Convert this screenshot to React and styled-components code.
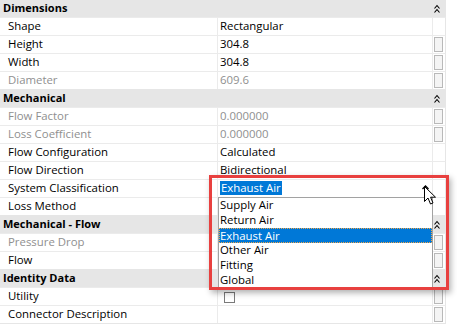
import React from "react";
import styled, { createGlobalStyle, css } from "styled-components";

const GlobalStyle = createGlobalStyle`
  body {
    margin: 0;
    background: #ffffff;
    font-family: "Open Sans", "Noto Sans", sans-serif;
    font-size: 11.4px;
    color: #000000;
  }
`;

const rows = [
  { section: "Dimensions", first: true },
  { label: "Shape", value: "Rectangular" },
  { label: "Height", value: "304.8", box: true },
  { label: "Width", value: "304.8", box: true },
  { label: "Diameter", value: "609.6", box: true, disabled: true },
  { section: "Mechanical" },
  { label: "Flow Factor", value: "0.000000", box: true, disabled: true },
  { label: "Loss Coefficient", value: "0.000000", box: true, disabled: true },
  { label: "Flow Configuration", value: "Calculated" },
  { label: "Flow Direction", value: "Bidirectional" },
  { label: "System Classification", combo: true },
  { label: "Loss Method", value: "" },
  { section: "Mechanical - Flow" },
  { label: "Pressure Drop", value: "", box: true, disabled: true },
  { label: "Flow", value: "", box: true },
  { section: "Identity Data" },
  { label: "Utility", check: true, box: true },
  { label: "Connector Description", value: "", box: true },
];

const options = ["Supply Air", "Return Air", "Exhaust Air", "Other Air", "Fitting", "Global"];

const Chevrons = () => (
  <svg width="6" height="9" viewBox="0 0 6 9">
    <polyline points="0.5,4.5 3,1.5 5.5,4.5" fill="none" stroke="#000" strokeWidth="1.1" />
    <polyline points="0.5,8.5 3,5.5 5.5,8.5" fill="none" stroke="#000" strokeWidth="1.1" />
  </svg>
);

const Caret = () => (
  <svg width="7" height="5" viewBox="0 0 7 5">
    <polyline points="0.5,4 3.5,1 6.5,4" fill="none" stroke="#000" strokeWidth="1.3" />
  </svg>
);

const Cursor = () => (
  <svg width="13" height="19" viewBox="0 0 13 19">
    <path
      d="M0.5 0.5 L0.5 15.5 L4 12 L6.5 18 L9 17 L6.6 11.2 L11.5 11.2 Z"
      fill="#ffffff"
      stroke="#000000"
      strokeWidth="1"
      strokeLinejoin="miter"
    />
  </svg>
);

const App = () => {
  return (
    <>
      <GlobalStyle />
      <Grid>
        {rows.map((r, i) =>
          r.section ? (
            <Section key={i} $first={r.first}>
              <SectionTitle>{r.section}</SectionTitle>
              <Chevrons />
            </Section>
          ) : (
            <Row key={i}>
              <Label $disabled={r.disabled}>{r.label}</Label>
              <Value $disabled={r.disabled}>
                {r.combo ? (
                  <>
                    <Selected>Exhaust Air</Selected>
                    <CaretWrap>
                      <Caret />
                    </CaretWrap>
                    <CursorWrap>
                      <Cursor />
                    </CursorWrap>
                    <List>
                      {options.map((o) => (
                        <Option key={o} $active={o === "Exhaust Air"}>
                          {o}
                        </Option>
                      ))}
                    </List>
                  </>
                ) : r.check ? (
                  <CheckBox />
                ) : (
                  r.value
                )}
              </Value>
              <ButtonCell>{r.box && <EditBox />}</ButtonCell>
            </Row>
          )
        )}
        <Highlight />
      </Grid>
    </>
  );
};

export default App;

const Grid = styled.div`
  position: relative;
  width: 446px;
  border-bottom: 1px solid #e6e6e6;
`;

const Section = styled.div`
  display: flex;
  align-items: center;
  justify-content: space-between;
  height: 18px;
  padding: 0 6px 0 3px;
  background: #e6e6e6;
  box-sizing: border-box;
  ${(p) =>
    p.$first &&
    css`
      margin-top: -1px;
    `}
`;

const SectionTitle = styled.span`
  font-weight: 700;
  font-size: 11px;
  line-height: 18px;
`;

const Row = styled.div`
  display: flex;
  height: 18px;
  box-sizing: border-box;
  border-top: 1px solid #ebebeb;
  border-right: 1px solid #e6e6e6;
`;

const Label = styled.div`
  width: 218px;
  box-sizing: border-box;
  padding-left: 8px;
  border-right: 1px solid #ebebeb;
  line-height: 16px;
  white-space: nowrap;
  color: ${(p) => (p.$disabled ? "#8f8f8f" : "#000000")};
`;

const Value = styled.div`
  position: relative;
  width: 215px;
  box-sizing: border-box;
  padding-left: 2px;
  border-right: 1px solid #ebebeb;
  line-height: 16px;
  white-space: nowrap;
  color: ${(p) => (p.$disabled ? "#8f8f8f" : "#000000")};
`;

const ButtonCell = styled.div`
  flex: 1;
  padding: 1px 0 0 1px;
`;

const EditBox = styled.div`
  width: 9px;
  height: 15px;
  box-sizing: border-box;
  border: 1px solid #b9b9b9;
  background: #f4f4f4;
`;

const CheckBox = styled.div`
  width: 11px;
  height: 11px;
  margin: 4px 0 0 4px;
  box-sizing: border-box;
  border: 1px solid #7a7a7a;
  background: #ffffff;
`;

const Selected = styled.span`
  display: inline-block;
  margin-top: 1px;
  padding: 0 1px;
  line-height: 14px;
  background: #0078d7;
  color: #ffffff;
`;

const CaretWrap = styled.div`
  position: absolute;
  left: 204px;
  top: 5px;
  line-height: 0;
`;

const CursorWrap = styled.div`
  position: absolute;
  left: 206px;
  top: 6px;
  line-height: 0;
  z-index: 3;
`;

const List = styled.div`
  position: absolute;
  left: 0;
  top: 17px;
  width: 215px;
  box-sizing: border-box;
  border: 1px solid #a2a2a2;
  background: #ffffff;
  z-index: 2;
`;

const Option = styled.div`
  height: 15px;
  line-height: 14px;
  padding-left: 1px;
  box-sizing: border-box;
  color: #000000;
  ${(p) =>
    p.$active &&
    css`
      background: #0078d7;
      color: #ffffff;
      border: 1px dotted #f0a64a;
      line-height: 13px;
      padding-left: 0;
    `}
`;

const Highlight = styled.div`
  position: absolute;
  left: 209px;
  top: 176px;
  width: 240px;
  height: 115px;
  box-sizing: border-box;
  border: 3px solid #e8403f;
  box-shadow: 2px 3px 6px rgba(0, 0, 0, 0.3);
  pointer-events: none;
  z-index: 4;
`;
